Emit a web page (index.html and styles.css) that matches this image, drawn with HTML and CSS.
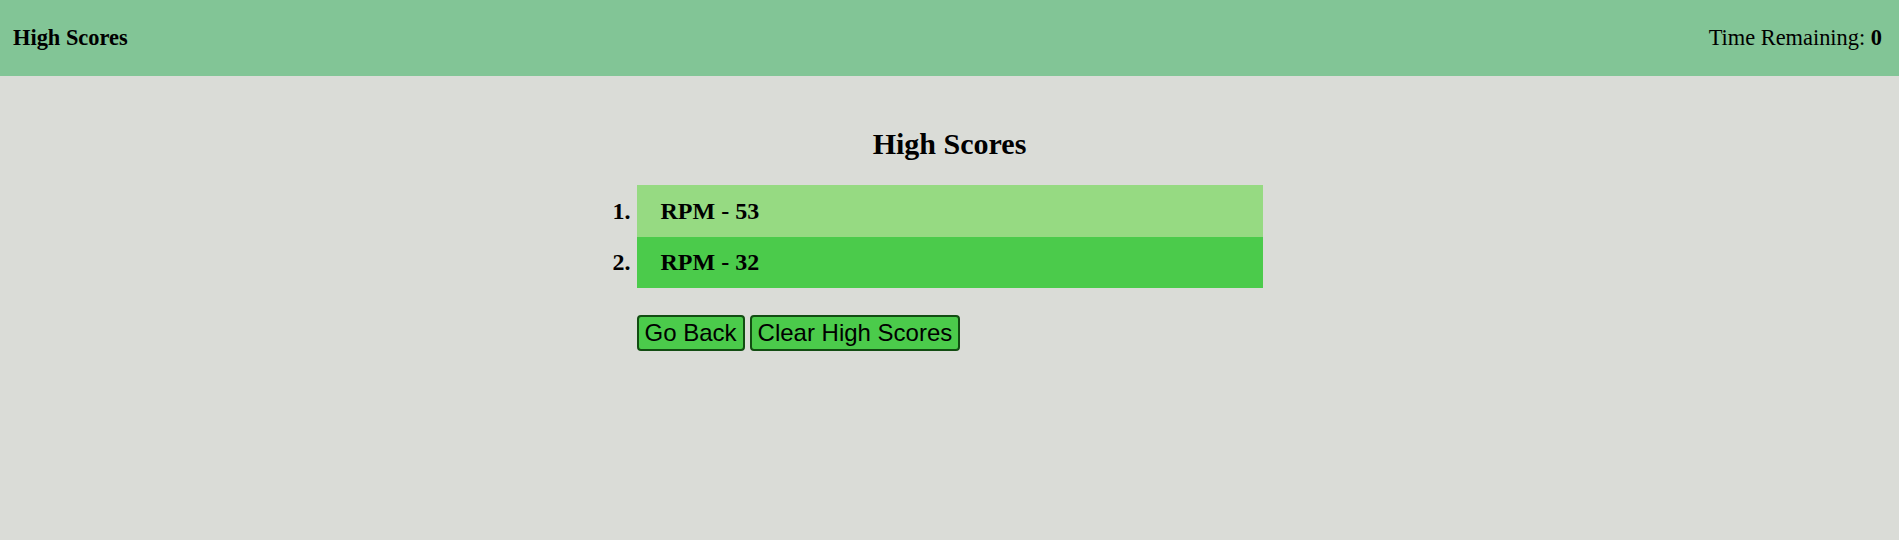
FILE: index.html
```html
<!DOCTYPE html>
<html lang="en">
<head>
<meta charset="utf-8">
<title>High Scores</title>
<link rel="stylesheet" href="styles.css">
</head>
<body>
<header class="topbar">
  <div class="topbar-title">High Scores</div>
  <div class="timer">Time Remaining: <span class="timer-value">0</span></div>
</header>
<main class="main">
  <h2 class="page-title">High Scores</h2>
  <section class="scores">
    <ol class="score-list">
      <li class="score-item score-item--first">RPM - 53</li>
      <li class="score-item score-item--second">RPM - 32</li>
    </ol>
    <div class="actions">
      <button class="btn" type="button">Go Back</button>
      <button class="btn" type="button">Clear High Scores</button>
    </div>
  </section>
</main>
</body>
</html>
```

FILE: styles.css
```css
html, body {
  margin: 0;
  padding: 0;
}

body {
  background: #dadcd7;
  font-family: "Liberation Serif", "Times New Roman", serif;
  color: #000;
  min-height: 540px;
}

.topbar {
  height: 76px;
  background: #82c596;
  display: flex;
  align-items: center;
  justify-content: space-between;
  padding: 0 17px 0 13px;
  font-size: 22.4px;
}

.topbar-title {
  font-weight: bold;
}

.timer-value {
  font-weight: bold;
}

.main {
  display: flex;
  flex-direction: column;
  align-items: center;
}

.page-title {
  margin: 51px 0 0;
  font-size: 30px;
  font-weight: bold;
}

.scores {
  width: 626px;
  margin-top: 24px;
}

.score-list {
  margin: 0;
  padding: 0;
  list-style: decimal outside;
}

.score-item {
  height: 52px;
  display: list-item;
  line-height: 52px;
  padding-left: 24px;
  font-size: 24px;
  font-weight: bold;
}

.score-item::marker {
  font-weight: bold;
}

.score-item--first {
  background: #96da82;
}

.score-item--second {
  background: #4bcb4b;
  height: 51px;
  line-height: 51px;
}

.actions {
  display: flex;
  gap: 5px;
  margin-top: 27px;
}

.btn {
  font-family: "Liberation Sans", Arial, sans-serif;
  font-size: 24px;
  background: #4bcb4b;
  color: #000;
  border: 2px solid #124d12;
  border-radius: 4px;
  padding: 2px 6px;
  margin: 0;
  line-height: normal;
  cursor: pointer;
}
```
